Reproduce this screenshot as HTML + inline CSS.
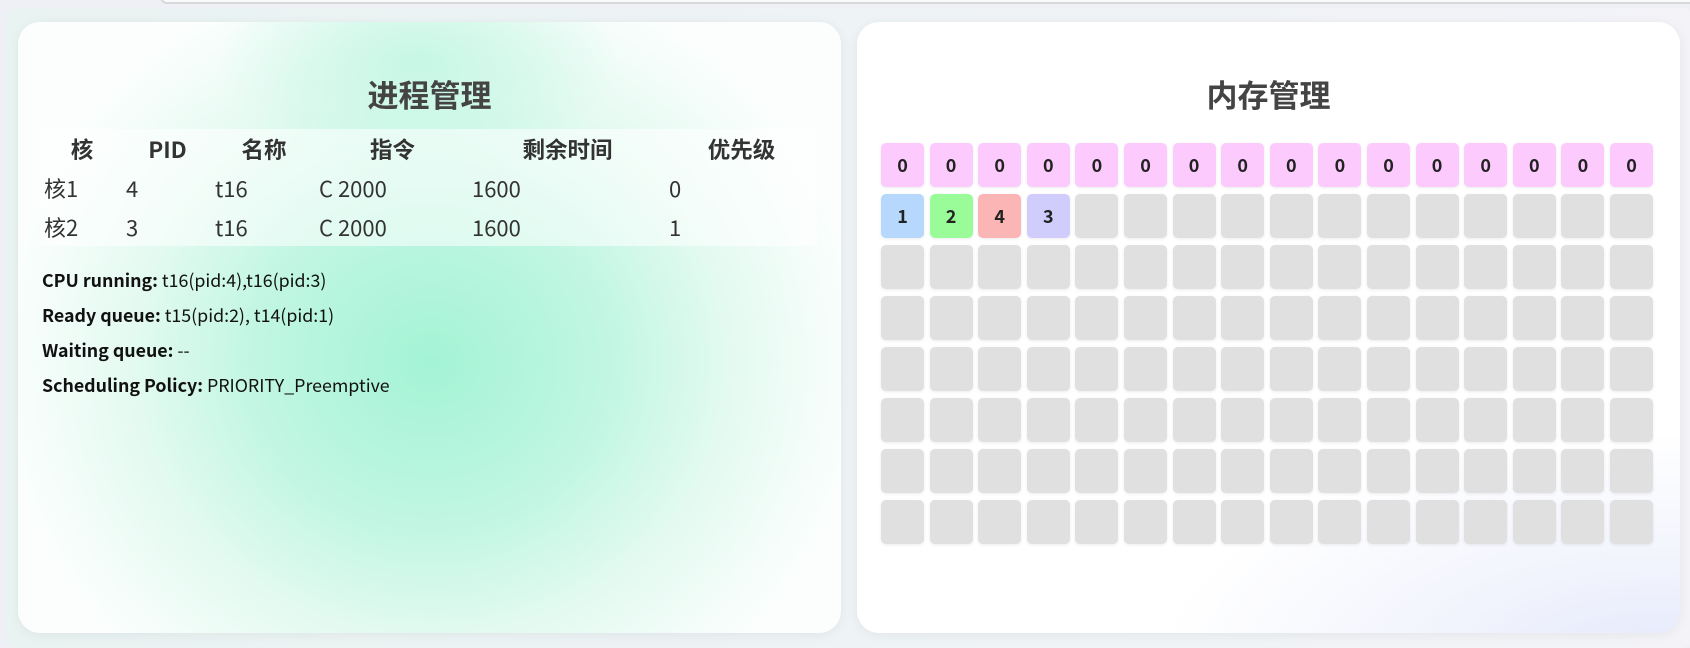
<!DOCTYPE html>
<html><head><meta charset="utf-8"><style>
*{margin:0;padding:0;box-sizing:border-box}
body{width:1690px;height:645px;overflow:hidden;background:#eef0f5;font-family:"Noto Sans CJK SC","Liberation Sans",sans-serif;position:relative;color:#333}
.topbar{position:absolute;left:160px;top:-10px;width:1560px;height:14px;border:2px solid #d8d8dc;border-radius:8px;background:#fafafa}
.wrap{position:absolute;left:6px;top:8px;width:1690px;height:640px;border-radius:14px;background:linear-gradient(90deg,#e9f3f2,#f3f3f8)}
.panel{position:absolute;top:22px;height:611px;border-radius:22px;box-shadow:0 2px 12px rgba(0,0,0,0.06)}
#p1{left:18px;width:823px;background:radial-gradient(ellipse 200px 120px at 400px 40px,rgba(190,246,225,0.8),rgba(190,246,225,0) 100%),radial-gradient(ellipse 430px 400px at 413px 340px,#a4f3d6 0%,#c0f6e2 40%,#e4faf1 70%,#fbfefd 100%);}
#p2{left:857px;width:823px;background:radial-gradient(ellipse 500px 240px at 800px 650px,#e3e8fb 0%,#f3f5fd 50%,#ffffff 100%)}
h2{position:absolute;width:100%;text-align:center;font-size:31px;font-weight:bold;color:#444;line-height:40px}
table{position:absolute;left:23px;top:107px;width:776px;border-collapse:collapse;background:rgba(255,255,255,0.55);font-size:22px}
th,td{height:39px;padding:0 3px;text-align:left;font-weight:normal}
th{text-align:center;font-weight:bold;color:#333;font-size:22.5px}
.info{position:absolute;left:24px;font-size:17.8px;color:#111}
.info b{font-weight:bold}
.grid{position:absolute;left:24px;top:121px}
.c{position:absolute;width:43px;height:44px;border-radius:5px;background:#e0e0e0;box-shadow:0 1px 3px rgba(0,0,0,0.08);font-size:18px;font-weight:bold;text-align:center;line-height:44px;color:#222}
</style></head><body>
<div class="wrap"></div>
<div class="topbar"></div>
<div class="panel" id="p1">
<h2 style="top:52px">进程管理</h2>
<table>
<colgroup><col style="width:82px"><col style="width:89px"><col style="width:104px"><col style="width:153px"><col style="width:197px"><col style="width:151px"></colgroup>
<tr><th>核</th><th>PID</th><th>名称</th><th>指令</th><th>剩余时间</th><th>优先级</th></tr>
<tr><td>核1</td><td>4</td><td>t16</td><td>C 2000</td><td>1600</td><td>0</td></tr>
<tr><td>核2</td><td>3</td><td>t16</td><td>C 2000</td><td>1600</td><td>1</td></tr>
</table>
<div class="info" style="top:245px"><b>CPU running:</b> t16(pid:4),t16(pid:3)</div>
<div class="info" style="top:280px"><b>Ready queue:</b> t15(pid:2), t14(pid:1)</div>
<div class="info" style="top:315px"><b>Waiting queue:</b> --</div>
<div class="info" style="top:350px"><b>Scheduling Policy:</b> PRIORITY_Preemptive</div>
</div>
<div class="panel" id="p2">
<h2 style="top:52px">内存管理</h2>
<div class="grid">
<script>
var s='',cols=['#b5d8fc','#99fc99','#fcb5b5','#d0ccfc'],lab=['1','2','4','3'];
for(var r=0;r<8;r++)for(var c=0;c<16;c++){var bg='#e0e0e0',t='';
if(r==0){bg='#fdcafd';t='0'}else if(r==1&&c<4){bg=cols[c];t=lab[c]}
s+='<div class="c" style="left:'+(c*48.6).toFixed(1)+'px;top:'+(r*51)+'px;background:'+bg+'">'+t+'</div>';}
document.write(s);
</script>
</div>
</div>
</body></html>
